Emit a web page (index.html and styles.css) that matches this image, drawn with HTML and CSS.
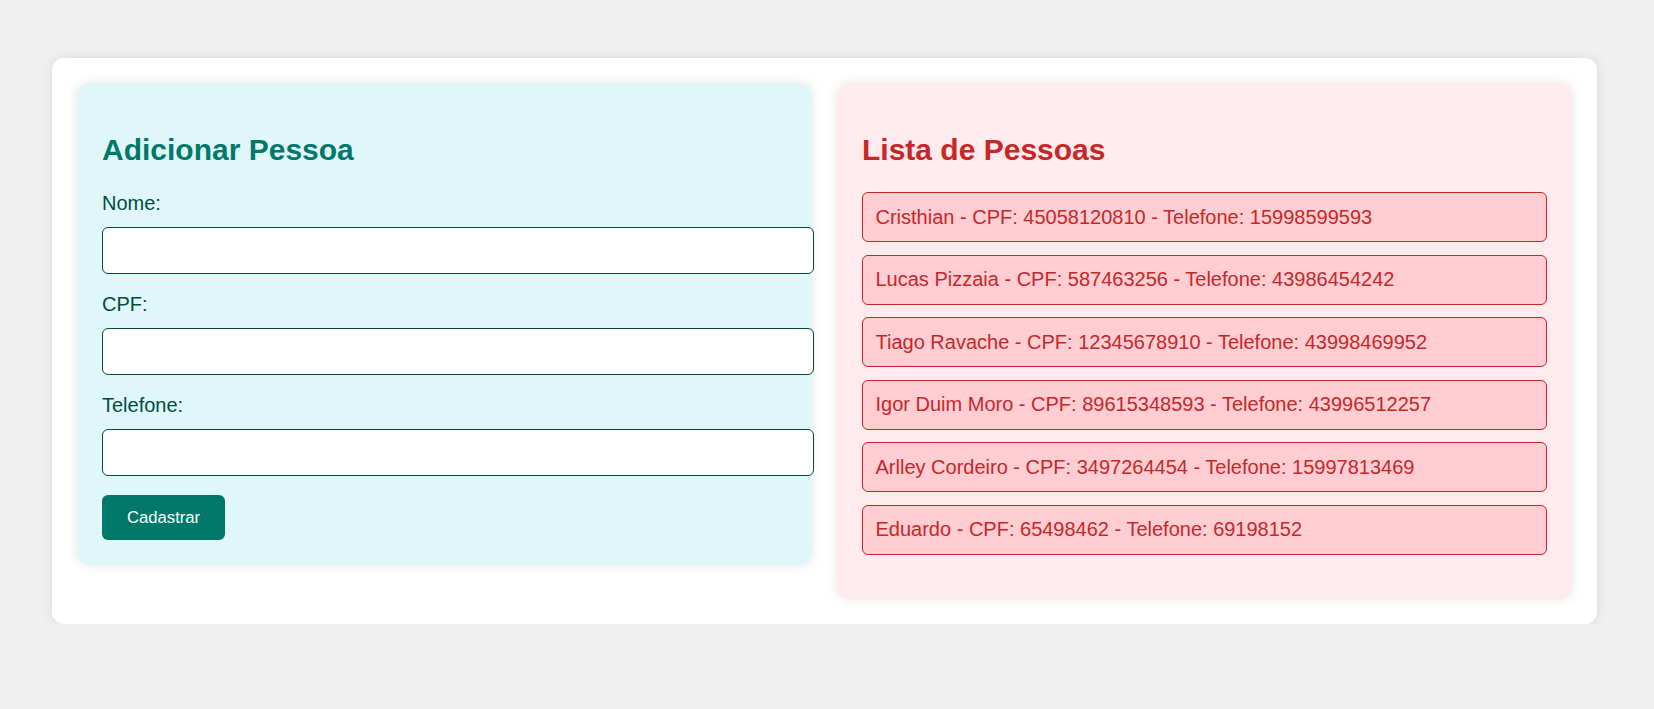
FILE: index.html
```html
<!DOCTYPE html>
<html lang="pt-BR">
<head>
<meta charset="utf-8">
<title>Cadastro de Pessoas</title>
<link rel="stylesheet" href="styles.css">
</head>
<body>
<div class="container">
  <div class="panel form-panel">
    <h2 class="form-title">Adicionar Pessoa</h2>
    <form class="person-form">
      <label class="field-label" for="nome">Nome:</label>
      <input class="field-input" id="nome" type="text">
      <label class="field-label" for="cpf">CPF:</label>
      <input class="field-input" id="cpf" type="text">
      <label class="field-label" for="telefone">Telefone:</label>
      <input class="field-input" id="telefone" type="text">
      <button class="submit-btn" type="button">Cadastrar</button>
    </form>
  </div>
  <div class="panel list-panel">
    <h2 class="list-title">Lista de Pessoas</h2>
    <ul class="person-list">
      <li class="person-item">Cristhian - CPF: 45058120810 - Telefone: 15998599593</li>
      <li class="person-item">Lucas Pizzaia - CPF: 587463256 - Telefone: 43986454242</li>
      <li class="person-item">Tiago Ravache - CPF: 12345678910 - Telefone: 43998469952</li>
      <li class="person-item">Igor Duim Moro - CPF: 89615348593 - Telefone: 43996512257</li>
      <li class="person-item">Arlley Cordeiro - CPF: 3497264454 - Telefone: 15997813469</li>
      <li class="person-item">Eduardo - CPF: 65498462 - Telefone: 69198152</li>
    </ul>
  </div>
</div>
</body>
</html>
```

FILE: styles.css
```css
html, body {
  margin: 0;
  padding: 0;
}

body {
  background: #f0f0f0;
  font-family: "Liberation Sans", Arial, sans-serif;
  font-size: 20px;
}

.container {
  box-sizing: border-box;
  width: 1545px;
  margin: 58px 0 0 52px;
  padding: 25px;
  background: #ffffff;
  border-radius: 12px;
  box-shadow: 0 0 12px rgba(0, 0, 0, 0.1);
  display: flex;
  align-items: flex-start;
  gap: 25px;
}

.panel {
  flex: 1 1 0;
  min-width: 0;
  padding: 25px;
  border-radius: 12px;
  box-shadow: 0 0 12px rgba(0, 0, 0, 0.1);
}

.form-panel {
  background: #e0f7fa;
}

.list-panel {
  background: #ffebee;
}

.form-title,
.list-title {
  font-size: 30px;
  font-weight: bold;
  margin: 25px 0;
}

.form-title {
  color: #00796b;
}

.list-title {
  color: #c62828;
}

.person-form {
  margin: 0;
}

.field-label {
  display: block;
  color: #004d40;
  font-size: 20px;
  margin-bottom: 12px;
}

.field-input {
  display: block;
  width: 100%;
  padding: 12.5px;
  margin: 0 0 19px 0;
  border: 1px solid #004d40;
  border-radius: 6px;
  background: #ffffff;
  font-family: "Liberation Sans", Arial, sans-serif;
  font-size: 16.67px;
}

.submit-btn {
  display: block;
  padding: 12.5px 25px;
  border: none;
  border-radius: 6px;
  background: #00796b;
  color: #ffffff;
  font-family: "Liberation Sans", Arial, sans-serif;
  font-size: 16.67px;
}

.person-list {
  list-style: none;
  padding: 0;
  margin: 20px 0 19px 0;
}

.person-item {
  padding: 12.5px;
  margin-bottom: 12.5px;
  background: #ffcdd2;
  border: 1px solid #c62828;
  border-radius: 6px;
  color: #c62828;
  font-size: 20px;
  line-height: 23px;
}

.person-item:last-child {
  margin-bottom: 0;
}
```
